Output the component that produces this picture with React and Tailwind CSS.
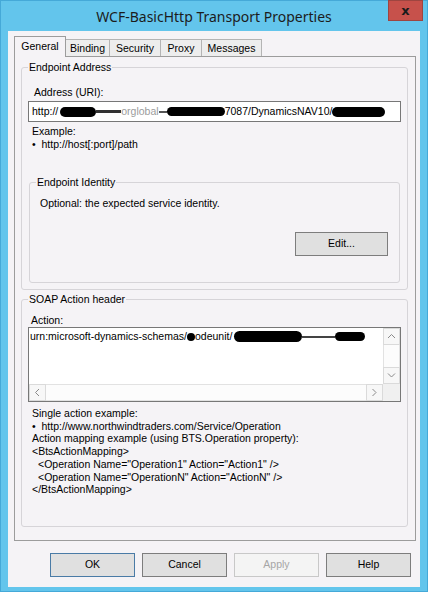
import React from 'react'

// Transport properties dialog, "General" tab

const TABS = [
  { label: 'General', w: 'w-[52px]', active: true },
  { label: 'Binding', w: 'w-[45px]' },
  { label: 'Security', w: 'w-[52px]' },
  { label: 'Proxy', w: 'w-[42px]' },
  { label: 'Messages', w: 'w-[61px]' },
]

function Tab({ label, w, active }) {
  if (active) {
    return (
      <div className={`relative z-10 -mb-px flex h-[21px] ${w} items-center justify-center border border-b-0 border-[#9c9c9c] bg-[#f5f3f6]`}>
        {label}
      </div>
    )
  }
  return (
    <div className={`-ml-px flex h-[17px] ${w} items-center justify-center border border-b-0 border-[#b4b4b4] bg-[#ededed] pt-px first:ml-0`}>
      {label}
    </div>
  )
}

function GroupBox({ label, className = '', labelClass = '', children }) {
  return (
    <div className={`flex flex-col rounded-[3px] border border-[#d6d4d8] ${className}`}>
      <div className={`-mt-[7px] w-fit bg-[#f5f3f6] px-px leading-[13px] ${labelClass}`}>{label}</div>
      {children}
    </div>
  )
}

// black marker strokes over hidden parts of the text
function Blot({ className }) {
  return <span className={`inline-block rounded-full bg-black align-middle ${className}`} />
}

function Chevron({ dir }) {
  const d = {
    up: 'M1 5 L4.5 1.5 L8 5',
    down: 'M1 1.5 L4.5 5 L8 1.5',
    left: 'M5 1 L1.5 4.5 L5 8',
    right: 'M1.5 1 L5 4.5 L1.5 8',
  }[dir]
  const vertical = dir === 'up' || dir === 'down'
  return (
    <svg width={vertical ? 9 : 7} height={vertical ? 7 : 9} viewBox={vertical ? '0 0 9 7' : '0 0 7 9'}>
      <path d={d} fill="none" stroke="#8a8a8a" strokeWidth="1" />
    </svg>
  )
}

function ArrowBox({ dir }) {
  return (
    <div className="flex h-[17px] w-[17px] shrink-0 items-center justify-center border border-[#dadada] bg-[#f7f7f7]">
      <Chevron dir={dir} />
    </div>
  )
}

function Button({ children, variant = 'normal', className = '' }) {
  const look = {
    normal: 'border-[#7d7d7d] bg-[#e0e0e0] text-black',
    primary: 'border-[#4a7ba6] bg-[#e0e0e0] text-black',
    disabled: 'border-[#c8c8c8] bg-[#f4f4f4] text-[#a6a6a6]',
  }[variant]
  return (
    <div className={`flex h-[24px] items-center justify-center border ${look} ${className}`}>
      {children}
    </div>
  )
}

export default function App() {
  return (
    <div className="flex h-[592px] w-[428px] flex-col border border-[#45a9d8] bg-[#63c5ec] font-['Liberation_Sans',Arial,sans-serif] text-[10.5px] text-black">
      {/* title bar */}
      <div className="grid h-[30px] shrink-0 grid-cols-[1fr_auto_1fr]">
        <div />
        <div className="self-center font-['Noto_Sans','Open_Sans',sans-serif] text-[14px] text-[#1c1c1c]">
          WCF-BasicHttp Transport Properties
        </div>
        <div className="flex justify-end pr-[4px]">
          <div className="-mt-px flex h-[21px] w-[35px] items-center justify-center border border-[#9e4540] bg-[#c7514b] font-['DejaVu_Sans',sans-serif] text-[13px] font-bold leading-none text-[#1b1b1b]">
            x
          </div>
        </div>
      </div>

      {/* client area */}
      <div className="mx-[7px] flex h-[556px] flex-col bg-[#f5f3f6] pl-[6px] pr-[4px] pt-[5px]">
        <div className="flex h-[20px] items-end">
          {TABS.map((t) => (
            <Tab key={t.label} {...t} />
          ))}
        </div>

        <div className="flex h-[485px] flex-col border border-[#9c9c9c] bg-[#f5f3f6] pl-[6px] pr-[7px] pt-[10px]">
          <GroupBox label="Endpoint Address" labelClass="ml-[6px]" className="h-[223px]">
            <div className="ml-[12px] mt-[12px] leading-[13px]">Address (URI):</div>
            <div className="ml-[6px] mt-[2px] flex h-[21px] w-[373px] items-center overflow-hidden whitespace-nowrap border border-[#777] bg-white pl-[3px]">
              <span>http://</span>
              <Blot className="ml-[2px] h-[10px] w-[36px]" />
              <span className="inline-block h-[3px] w-[25px] bg-[#333]" />
              <span className="text-[#9c9c9c]">orglobal</span>
              <span className="inline-block h-[2px] w-[8px] bg-[#555]" />
              <Blot className="h-[9px] w-[58px]" />
              <span>7087/DynamicsNAV10/</span>
              <Blot className="h-[10px] w-[53px]" />
            </div>
            <div className="ml-[10px] mt-[3px] leading-[12.5px]">
              <div>Example:</div>
              <div className="whitespace-pre">•  http://host[:port]/path</div>
            </div>

            <GroupBox label="Endpoint Identity" labelClass="ml-[6px]" className="mx-[7px] mt-[32px] h-[101px]">
              <div className="ml-[10px] mt-[8px] leading-[13px]">Optional: the expected service identity.</div>
              <Button className="mr-[11px] mt-[22px] w-[93px] self-end">Edit...</Button>
            </GroupBox>
          </GroupBox>

          <GroupBox label="SOAP Action header" labelClass="ml-[6px]" className="mt-[9px] h-[228px]">
            <div className="ml-[9px] mt-[8px] leading-[13px]">Action:</div>
            <div className="ml-[6px] flex h-[75px] w-[373px] flex-col border border-[#777] bg-white">
              <div className="flex h-[56px]">
                <div className="flex flex-1 items-start overflow-hidden whitespace-nowrap pl-[1px] pt-[2px] leading-[13px]">
                  <span>urn:microsoft-dynamics-schemas/</span>
                  <Blot className="mt-[3px] h-[8px] w-[8px]" />
                  <span>odeunit/</span>
                  <Blot className="ml-[2px] mt-[1px] h-[11px] w-[68px]" />
                  <span className="mt-[6px] inline-block h-[2px] w-[33px] bg-[#444]" />
                  <Blot className="mt-[2px] h-[9px] w-[30px]" />
                </div>
                <div className="flex w-[17px] flex-col bg-[#fcfcfc]">
                  <ArrowBox dir="up" />
                  <div className="flex-1 border-x border-[#e2e2e2]" />
                  <ArrowBox dir="down" />
                </div>
              </div>
              <div className="flex h-[17px]">
                <div className="flex flex-1 bg-[#fcfcfc]">
                  <ArrowBox dir="left" />
                  <div className="flex-1 border-y border-[#e2e2e2]" />
                  <ArrowBox dir="right" />
                </div>
                <div className="w-[17px] bg-[#f0f0f0]" />
              </div>
            </div>
            <div className="ml-[10px] mt-[5px] leading-[12.7px]">
              <div>Single action example:</div>
              <div className="whitespace-pre">•  http://www.northwindtraders.com/Service/Operation</div>
              <div>Action mapping example (using BTS.Operation property):</div>
              <div>{'<BtsActionMapping>'}</div>
              <div className="pl-[6px]">{'<Operation Name="Operation1" Action="Action1" />'}</div>
              <div className="pl-[6px]">{'<Operation Name="OperationN" Action="ActionN" />'}</div>
              <div>{'</BtsActionMapping>'}</div>
            </div>
          </GroupBox>
        </div>

        {/* dialog buttons */}
        <div className="mt-[12px] flex gap-[7px] pl-[36px]">
          <Button variant="primary" className="w-[85px]">OK</Button>
          <Button className="w-[85px]">Cancel</Button>
          <Button variant="disabled" className="w-[85px]">Apply</Button>
          <Button className="w-[85px]">Help</Button>
        </div>
      </div>
    </div>
  )
}
